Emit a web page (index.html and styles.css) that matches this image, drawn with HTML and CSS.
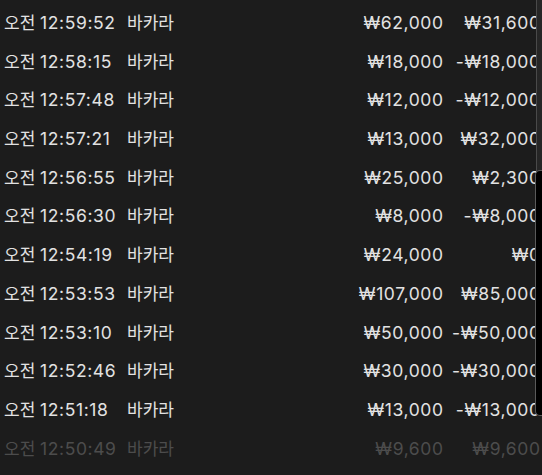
FILE: index.html
```html
<!DOCTYPE html>
<html lang="ko">
<head>
<meta charset="utf-8">
<link rel="stylesheet" href="styles.css">
</head>
<body>
<div class="list">
  <div class="row"><span class="time">오전 <span class="num">12:59:52</span></span><span class="game">바카라</span><span class="amt num">₩62,000</span><span class="res num">₩31,600</span></div>
  <div class="row"><span class="time">오전 <span class="num">12:58:15</span></span><span class="game">바카라</span><span class="amt num">₩18,000</span><span class="res num">-₩18,000</span></div>
  <div class="row"><span class="time">오전 <span class="num">12:57:48</span></span><span class="game">바카라</span><span class="amt num">₩12,000</span><span class="res num">-₩12,000</span></div>
  <div class="row"><span class="time">오전 <span class="num">12:57:21</span></span><span class="game">바카라</span><span class="amt num">₩13,000</span><span class="res num">₩32,000</span></div>
  <div class="row"><span class="time">오전 <span class="num">12:56:55</span></span><span class="game">바카라</span><span class="amt num">₩25,000</span><span class="res num">₩2,300</span></div>
  <div class="row"><span class="time">오전 <span class="num">12:56:30</span></span><span class="game">바카라</span><span class="amt num">₩8,000</span><span class="res num">-₩8,000</span></div>
  <div class="row"><span class="time">오전 <span class="num">12:54:19</span></span><span class="game">바카라</span><span class="amt num">₩24,000</span><span class="res num">₩0</span></div>
  <div class="row"><span class="time">오전 <span class="num">12:53:53</span></span><span class="game">바카라</span><span class="amt num">₩107,000</span><span class="res num">₩85,000</span></div>
  <div class="row"><span class="time">오전 <span class="num">12:53:10</span></span><span class="game">바카라</span><span class="amt num">₩50,000</span><span class="res num">-₩50,000</span></div>
  <div class="row"><span class="time">오전 <span class="num">12:52:46</span></span><span class="game">바카라</span><span class="amt num">₩30,000</span><span class="res num">-₩30,000</span></div>
  <div class="row"><span class="time">오전 <span class="num">12:51:18</span></span><span class="game">바카라</span><span class="amt num">₩13,000</span><span class="res num">-₩13,000</span></div>
  <div class="row faded"><span class="time">오전 <span class="num">12:50:49</span></span><span class="game">바카라</span><span class="amt num">₩9,600</span><span class="res num">₩9,600</span></div>
</div>
<div class="edge-strip"></div>
<div class="edge-panel"></div>
</body>
</html>
```
FILE: styles.css
```css
html, body {
  margin: 0;
  padding: 0;
  background: #1c1c1c;
  width: 542px;
  height: 475px;
  overflow: hidden;
}
body {
  position: relative;
  font-family: "Inter", "Noto Sans CJK KR", sans-serif;
  font-size: 17px;
  color: #e2e2e2;
}
.list {
  padding: 4px 2px 0 4px;
}
.row {
  display: grid;
  grid-template-columns: 123px 1fr 120px 97px;
  height: 38.7px;
  line-height: 38.7px;
  white-space: nowrap;
}
.num {
  font-size: 17.5px;
  letter-spacing: 0.6px;
}
.amt, .res {
  text-align: right;
  margin-right: -0.6px;
}
.faded {
  color: #4c4c4c;
}
.edge-strip {
  position: absolute;
  right: 0;
  top: 0;
  width: 5px;
  height: 172px;
  border-left: 1px solid #4a4a4a;
  background: #262626;
}
.edge-panel {
  position: absolute;
  right: 0;
  top: 170px;
  width: 6px;
  height: 244px;
  background: #000;
  border: 1px solid #5a5a5a;
  border-right: none;
  border-radius: 5px 0 0 5px;
}
```
